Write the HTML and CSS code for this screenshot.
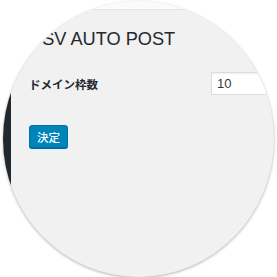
FILE: index.html
```html
<!DOCTYPE html>
<html lang="ja">
<head>
<meta charset="utf-8">
<link rel="stylesheet" href="styles.css">
</head>
<body>
<div class="frame">
  <div class="lens">
    <div class="topbar"></div>
    <div class="page">
      <div class="sidebar"></div>
      <div class="main">
        <h1 class="title">CSV AUTO POST</h1>
        <div class="row">
          <label class="label">ドメイン枠数</label>
          <input class="field" type="text" value="10">
        </div>
        <button class="btn" type="button">決定</button>
      </div>
    </div>
  </div>
</div>
</body>
</html>
```
FILE: styles.css
```css
html, body {
  margin: 0;
  padding: 0;
  background: #fff;
}
.frame {
  width: 277px;
  height: 277px;
  overflow: hidden;
  background: #fff;
}
.lens {
  margin: 1px 0 0 3px;
  width: 271px;
  height: 276px;
  border-radius: 50%;
  overflow: hidden;
  display: flex;
  flex-direction: column;
  background: #f1f1f1;
  box-shadow: 0 1px 3px rgba(0,0,0,0.3);
}
.topbar {
  height: 8px;
  flex: none;
  background: #fbfbfb;
  border-bottom: 1px solid #e4e4e4;
}
.page {
  flex: 1;
  display: flex;
}
.sidebar {
  width: 8px;
  flex: none;
  background: #23282d;
}
.main {
  flex: 1;
  padding: 16px 0 0 18px;
  font-family: "Liberation Sans", Arial, "Noto Sans CJK JP", sans-serif;
  color: #23282d;
}
.title {
  margin: 0;
  font-size: 18.2px;
  font-weight: 400;
  line-height: 26px;
  white-space: nowrap;
}
.row {
  margin-top: 20px;
  display: flex;
  align-items: center;
  height: 23px;
}
.label {
  width: 182px;
  flex: none;
  font-family: "Noto Sans CJK JP", sans-serif;
  font-weight: 700;
  font-size: 11.5px;
  color: #23282d;
}
.field {
  box-sizing: border-box;
  width: 90px;
  height: 23px;
  flex: none;
  margin: 0;
  padding: 0 5px;
  border: 1px solid #ddd;
  background: #fff;
  box-shadow: inset 0 1px 2px rgba(0,0,0,0.07);
  font-family: "Liberation Sans", Arial, sans-serif;
  font-size: 13px;
  color: #32373c;
  outline: none;
}
.btn {
  display: block;
  margin-top: 30px;
  box-sizing: border-box;
  width: 39px;
  height: 23px;
  padding: 0;
  border: 1px solid #0073aa;
  border-radius: 3px;
  background: #0085ba;
  box-shadow: 0 1px 0 #006799;
  color: #fff;
  font-family: "Noto Sans CJK JP", sans-serif;
  font-weight: 500;
  font-size: 11.5px;
  line-height: 20px;
}
```
